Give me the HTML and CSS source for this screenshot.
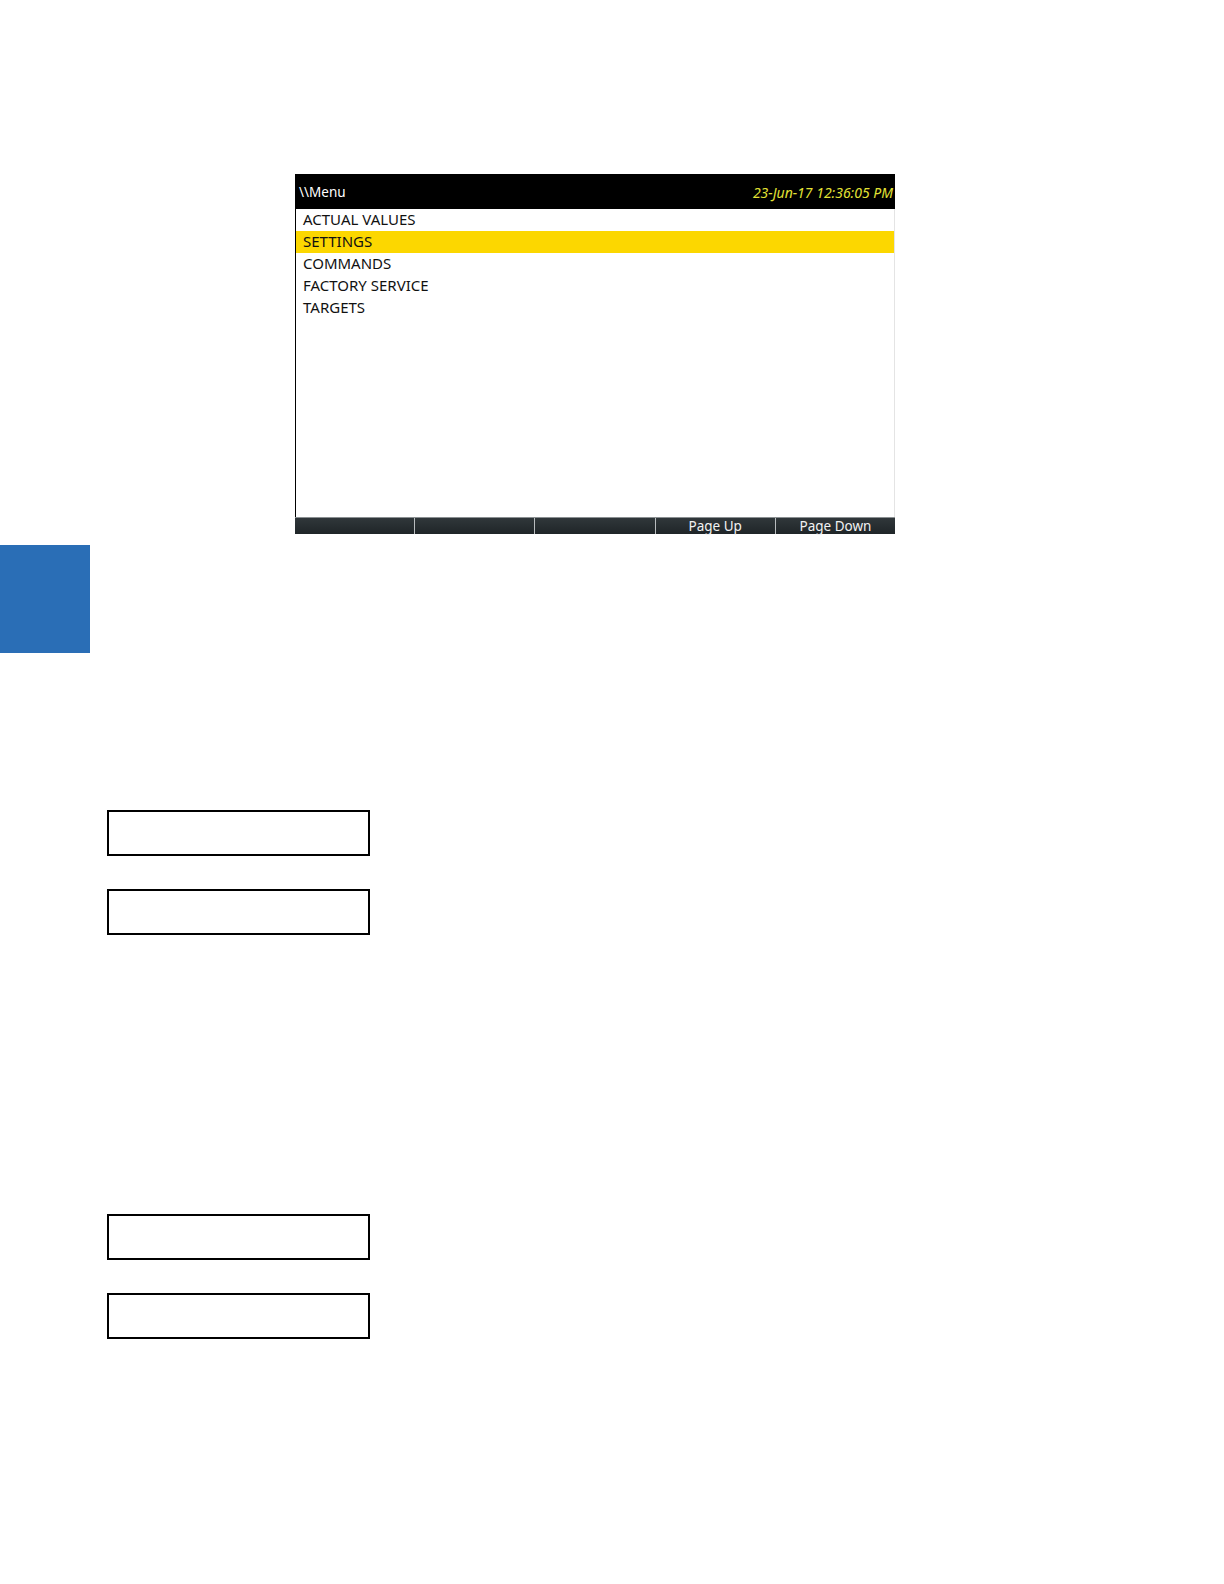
FILE: index.html
```html
<!DOCTYPE html>
<html>
<head>
<meta charset="utf-8">
<link rel="stylesheet" href="styles.css">
</head>
<body>
<div class="page">
  <div class="screen">
    <div class="header">
      <span class="path">\\Menu</span>
      <span class="clock">23-Jun-17 12:36:05 PM</span>
    </div>
    <div class="menu">
      <div class="item">ACTUAL VALUES</div>
      <div class="item selected">SETTINGS</div>
      <div class="item">COMMANDS</div>
      <div class="item">FACTORY SERVICE</div>
      <div class="item">TARGETS</div>
    </div>
    <div class="softkeys">
      <div class="key"></div>
      <div class="key"></div>
      <div class="key"></div>
      <div class="key">Page Up</div>
      <div class="key">Page Down</div>
    </div>
  </div>
  <div class="tab"></div>
  <div class="boxes first">
    <div class="box"></div>
    <div class="box"></div>
  </div>
  <div class="boxes second">
    <div class="box"></div>
    <div class="box"></div>
  </div>
</div>
</body>
</html>
```
FILE: styles.css
```css
html, body {
  margin: 0;
  padding: 0;
  background: #ffffff;
}
.page {
  width: 1224px;
  height: 1584px;
  padding-top: 174px;
  box-sizing: border-box;
  font-family: "Noto Sans", "Open Sans", sans-serif;
}
.screen {
  margin-left: 295px;
  width: 600px;
  display: flex;
  flex-direction: column;
}
.header {
  height: 35px;
  background: #000000;
  display: flex;
  align-items: center;
  justify-content: space-between;
  padding: 1px 2px 0 4px;
  box-sizing: border-box;
}
.path {
  color: #ffffff;
  font-size: 13.5px;
}
.clock {
  color: #e3e335;
  font-size: 14px;
  font-style: italic;
}
.menu {
  height: 308px;
  border-left: 1px solid #000000;
  border-right: 1px solid #e4e4e4;
  display: flex;
  flex-direction: column;
}
.item {
  height: 22px;
  line-height: 21px;
  padding-left: 7px;
  font-size: 15px;
  color: #111111;
}
.item.selected {
  background: #fcd700;
}
.softkeys {
  height: 17px;
  display: flex;
  background: linear-gradient(#30373a, #1f2528);
  border-top: 1px solid #8a8f91;
  box-sizing: border-box;
}
.key {
  flex: 1;
  border-left: 1px solid #b8bcbe;
  color: #f2f2f2;
  font-size: 13.5px;
  line-height: 16px;
  text-align: center;
}
.key:first-child {
  border-left: none;
}
.tab {
  margin-top: 11px;
  width: 90px;
  height: 108px;
  background: #2a6eb6;
}
.boxes {
  margin-left: 107px;
  display: flex;
  flex-direction: column;
  gap: 33px;
}
.boxes.first {
  margin-top: 157px;
}
.boxes.second {
  margin-top: 279px;
}
.box {
  width: 263px;
  height: 46px;
  border: 2px solid #000000;
  box-sizing: border-box;
}
```
